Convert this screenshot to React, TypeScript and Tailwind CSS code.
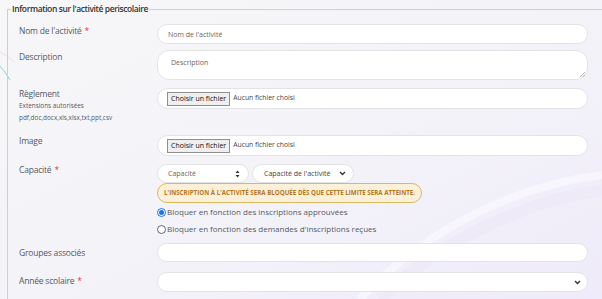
import type { ReactNode } from 'react';

function Label({ children, required }: { children: ReactNode; required?: boolean }) {
  return (
    <div className="text-[8.5px] leading-[12px] tracking-[-0.2px] text-[#555a64]">
      {children}
      {required && <span className="ml-[3px] text-[#e53935]">*</span>}
    </div>
  );
}

function Row({ label, children, className = '' }: { label: ReactNode; children: ReactNode; className?: string }) {
  return (
    <div className={`flex items-start ${className}`}>
      <div className="w-[138px] shrink-0">{label}</div>
      <div className="min-w-0 flex-1">{children}</div>
    </div>
  );
}

function FileField() {
  return (
    <div className="flex h-[21px] items-center rounded-full border border-[#e3e3e6] bg-white pl-[9px]">
      <span className="flex h-[14px] items-center border border-[#8f8f8f] bg-[#efefef] px-[3px] text-[7px] text-[#111]">
        Choisir un fichier
      </span>
      <span className="ml-[3px] text-[6.8px] text-[#444]">Aucun fichier choisi</span>
    </div>
  );
}

function Chevron() {
  return (
    <svg width="7" height="5" viewBox="0 0 7 5" className="shrink-0">
      <path d="M1 1 L3.5 3.5 L6 1" fill="none" stroke="#333" strokeWidth="1.4" />
    </svg>
  );
}

function Radio({ checked, children }: { checked?: boolean; children: ReactNode }) {
  return (
    <div className="flex h-[10px] items-center text-[8px] text-[#555a64]">
      <span
        className={`mr-[1px] flex h-[9px] w-[9px] items-center justify-center rounded-full border ${
          checked ? 'border-[#1a73e8]' : 'border-[#666]'
        } bg-white`}
      >
        {checked && <span className="h-[5px] w-[5px] rounded-full bg-[#1a73e8]" />}
      </span>
      {children}
    </div>
  );
}

export default function App() {
  return (
    <div
      className="relative h-[299px] w-[602px] overflow-hidden bg-linear-to-br from-[#f7f7f8] via-[#f4f3f8] to-[#efebfa] leading-none"
      style={{ fontFamily: '"Open Sans", "Noto Sans", sans-serif' }}
    >
      <svg className="absolute inset-0" width="602" height="299" viewBox="0 0 602 299">
        <path d="M-20 40 C 0 52, 8 56, 14 62" fill="none" stroke="#f6d9e2" strokeWidth="1" />
        <path d="M-4 62 C 2 68, 6 73, 10 80" fill="none" stroke="#7fd6df" strokeWidth="1" />
        <path d="M380 299 C 440 240, 530 200, 602 190" fill="none" stroke="#ece8f8" strokeWidth="12" opacity="0.7" />
        <path d="M360 299 C 430 225, 520 185, 602 175" fill="none" stroke="#f8f7fc" strokeWidth="8" opacity="0.8" />
      </svg>
      <fieldset className="relative ml-[7px] mt-[3px] w-[640px] border-l border-t border-[#cfcfd3] pb-4 pl-[11px] pr-[59px]">
        <legend className="-ml-[8px] px-[1px] text-[8.5px] leading-[12px] font-semibold tracking-[-0.4px] text-[#333]">
          Information sur l'activité periscolaire
        </legend>

        <Row label={<div className="pt-[1px]"><Label required>Nom de l'activité</Label></div>} className="mt-[9px]">
          <div className="flex h-[20px] items-center rounded-full border border-[#e3e3e6] bg-white pl-[10px] text-[7px] text-[#666]">
            Nom de l'activité
          </div>
        </Row>

        <Row label={<div className="pt-[1px]"><Label>Description</Label></div>} className="mt-[6px]">
          <div className="relative h-[30px] rounded-[12px] border border-[#e3e3e6] bg-white pl-[13px] pt-[8px] text-[7px] text-[#666]">
            Description
            <svg className="absolute bottom-[2px] right-[2px]" width="5" height="5" viewBox="0 0 5 5">
              <path d="M0 5 L5 0 M2.5 5 L5 2.5" stroke="#999" strokeWidth="0.8" />
            </svg>
          </div>
        </Row>

        <Row
          label={
            <div>
              <Label>Règlement</Label>
              <div className="text-[6.4px] leading-[12px] text-[#555a64]">Extensions autorisées</div>
              <div className="text-[6.4px] leading-[12px] text-[#555a64]">pdf,doc,docx,xls,xlsx,txt,ppt,csv</div>
            </div>
          }
          className="mt-[8px]"
        >
          <FileField />
        </Row>

        <Row label={<Label>Image</Label>} className="mt-[11px]">
          <FileField />
        </Row>

        <Row label={<Label required>Capacité</Label>} className="mt-[8px]">
          <div className="flex gap-[3px]">
            <div className="flex h-[19px] w-[92px] items-center justify-between rounded-full border border-[#e3e3e6] bg-white pl-[10px] pr-[8px] text-[7px] text-[#666]">
              Capacité
              <svg width="5" height="8" viewBox="0 0 5 8">
                <path d="M0.5 3 L2.5 0.5 L4.5 3 Z M0.5 5 L2.5 7.5 L4.5 5 Z" fill="#333" />
              </svg>
            </div>
            <div className="flex h-[19px] w-[102px] items-center justify-between rounded-full border border-[#e3e3e6] bg-white pl-[11px] pr-[7px] text-[7px] text-[#444]">
              Capacité de l'activité
              <Chevron />
            </div>
          </div>
          <div className="flex h-[20px] w-[265px] items-center justify-center rounded-full border border-[#d9b95e] bg-[#fcf1d8] text-[6.2px] font-bold uppercase text-[#b5761b]">
            L'inscription à l'activité sera bloquée dès que cette limite sera atteinte.
          </div>
          <div className="mt-[4px] flex flex-col gap-[7px]">
            <Radio checked>Bloquer en fonction des inscriptions approuvées</Radio>
            <Radio>Bloquer en fonction des demandes d'inscriptions reçues</Radio>
          </div>
        </Row>

        <Row label={<div className="pt-[4px]"><Label>Groupes associés</Label></div>} className="mt-[9px]">
          <div className="h-[19px] rounded-full border border-[#e3e3e6] bg-white" />
        </Row>

        <Row label={<div className="pt-[3px]"><Label required>Année scolaire</Label></div>} className="mt-[10px]">
          <div className="flex h-[20px] items-center justify-end rounded-full border border-[#e3e3e6] bg-white pr-[6px]">
            <Chevron />
          </div>
        </Row>
      </fieldset>
    </div>
  );
}
